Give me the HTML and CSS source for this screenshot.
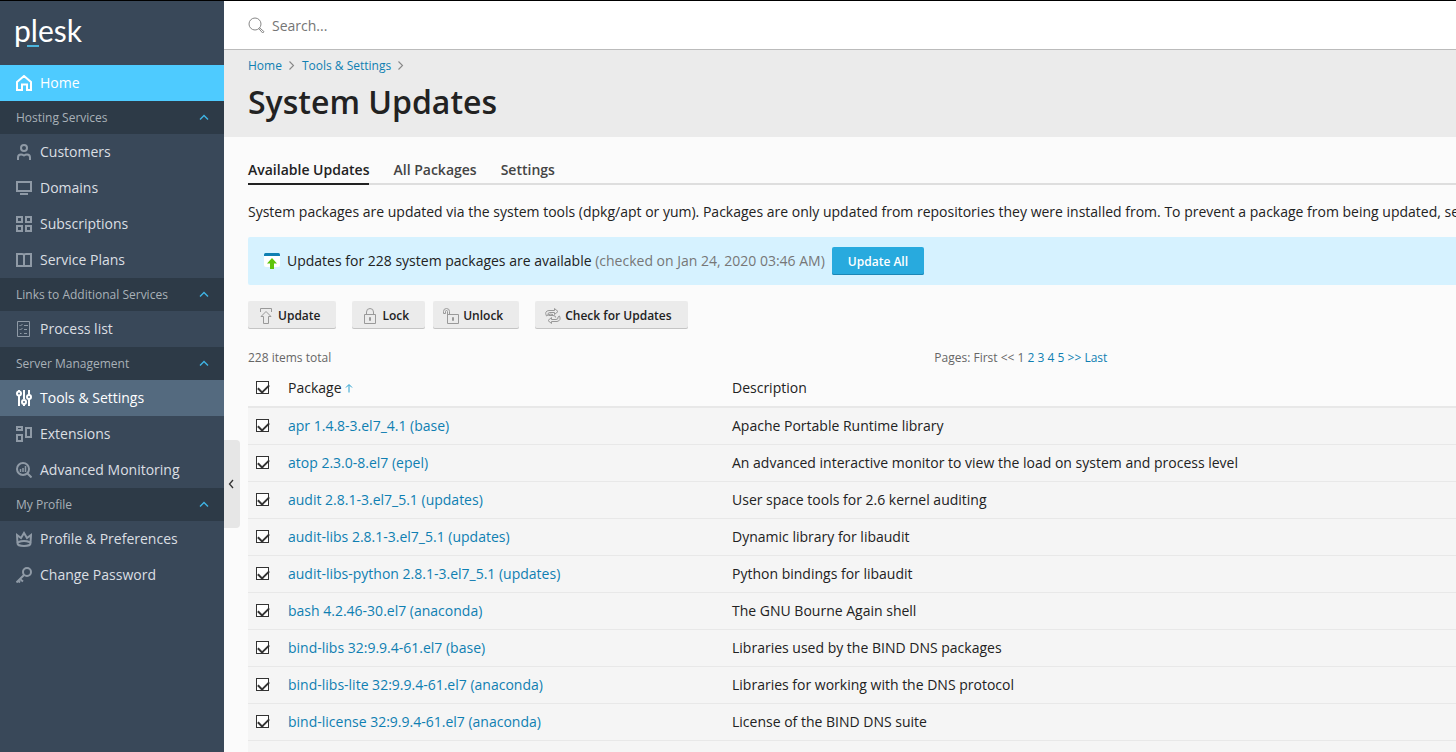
FILE: index.html
```html
<!DOCTYPE html>
<html lang="en">
<head>
<meta charset="utf-8">
<title>System Updates - Plesk</title>
<link rel="stylesheet" href="styles.css">
</head>
<body>
<svg class="sprite" aria-hidden="true">
  <symbol id="chevron-up" viewBox="0 0 10 10"><path d="M1 6.500l4-4 4 4" fill="none" stroke="currentColor" stroke-width="1.4"/></symbol>
  <symbol id="chevron-right" viewBox="0 0 8 12"><path d="M1.500 1.500l4 4-4 4" fill="none" stroke="currentColor" stroke-width="1.100"/></symbol>
</svg>
<div class="app">
  <aside class="sidebar">
    <a class="logo" href="#">p<span class="logo-mark">l</span>esk</a>
    <nav>
      <a class="item home" href="#"><svg class="icon" viewBox="0 0 16 16"><path d="M1 15V7l7-6 7 6v8h-4V9.500H6V15z"/></svg>Home</a>
      <button class="group" type="button">Hosting Services<svg class="chevron"><use href="#chevron-up"/></svg></button>
      <a class="item" href="#"><svg class="icon" viewBox="0 0 16 16"><circle cx="8" cy="4" r="3"/><path d="M2 16v-2.500q0-3 3-3 1.500 0 3 1 1.500-1 3-1 3 0 3 3V16"/></svg>Customers</a>
      <a class="item" href="#"><svg class="icon" viewBox="0 0 16 16"><path d="M1 2h14v9H1zM4 14h8"/></svg>Domains</a>
      <a class="item" href="#"><svg class="icon" viewBox="0 0 16 16"><path d="M1 1h5v5H1zM10 1h5v5h-5zM1 10h5v5H1zM10 10h5v5h-5z"/></svg>Subscriptions</a>
      <a class="item" href="#"><svg class="icon" viewBox="0 0 16 16"><path d="M1 2h5q2 0 2 1 0-1 2-1h5v12H9.500Q8 14 8 15q0-1-1.500-1H1zM8 3v12"/></svg>Service Plans</a>
      <button class="group" type="button">Links to Additional Services<svg class="chevron"><use href="#chevron-up"/></svg></button>
      <a class="item" href="#"><svg class="icon thin" viewBox="0 0 16 16"><path d="M1.500.5h12v15h-12zM3.500 4l1 1 2-2M3.500 8l1 1 2-2M4 12.500h1.500M8 4.500h4M8 8.500h3M8 12.500h3"/></svg>Process list</a>
      <button class="group" type="button">Server Management<svg class="chevron"><use href="#chevron-up"/></svg></button>
      <a class="item current" href="#"><svg class="icon" viewBox="0 0 16 16"><path d="M3 6v10M3 0v2M8 0v9M8 14v2M13 0v5M13 9v7"/><circle cx="3" cy="3.500" r="2"/><circle cx="8" cy="12" r="2"/><circle cx="13" cy="7" r="2"/></svg>Tools &amp; Settings</a>
      <a class="item" href="#"><svg class="icon" viewBox="0 0 16 16"><path d="M1 1h5v3H1zM1 9h5v6H1zM10 2h5v9h-5z"/></svg>Extensions</a>
      <a class="item" href="#"><svg class="icon" viewBox="0 0 16 16"><circle cx="7" cy="7" r="6"/><path d="M11.500 11.500l4 4"/><path stroke-width="1.500" d="M4.500 7v3M7 6v4M9.500 4v6"/></svg>Advanced Monitoring</a>
      <button class="group" type="button">My Profile<svg class="chevron"><use href="#chevron-up"/></svg></button>
      <a class="item" href="#"><svg class="icon" viewBox="0 0 16 16"><path d="M1.500 12L1 4l4 3 3-5 3 5 4-3-.5 8"/><ellipse cx="8" cy="12.500" rx="6.500" ry="2.500"/></svg>Profile &amp; Preferences</a>
      <a class="item" href="#"><svg class="icon" viewBox="0 0 16 16"><circle cx="11" cy="5" r="4"/><path d="M8 8l-7.500 7.500M4 12l3 2.500M2 13.500l2 2"/></svg>Change Password</a>
    </nav>
    <button class="collapse" type="button" aria-label="Collapse menu"><svg viewBox="0 0 6 10"><path d="M5 1L1.500 5 5 9"/></svg></button>
  </aside>
  <div class="page">
    <header class="topbar">
      <svg class="search-icon" viewBox="0 0 17 17"><circle cx="7" cy="7" r="6"/><path d="M11.300 10.500l4.700 4.200-1.300 1.300-4.200-4.700"/></svg>
      <input class="search" type="search" placeholder="Search..." aria-label="Search">
    </header>
    <div class="heading">
      <nav class="crumbs"><a href="#">Home</a><svg><use href="#chevron-right"/></svg><a href="#">Tools &amp; Settings</a><svg><use href="#chevron-right"/></svg></nav>
      <h1>System Updates</h1>
    </div>
    <main class="content">
      <nav class="tabs"><a class="active" href="#">Available Updates</a><a href="#">All Packages</a><a href="#">Settings</a></nav>
      <p class="intro">System packages are updated via the system tools (dpkg/apt or yum). Packages are only updated from repositories they were installed from. To prevent a package from being updated, se</p>
      <div class="notice">
        <svg class="notice-icon" viewBox="0 0 16 16"><path fill="#fff" d="M0 2h16v10q0 2-2 2H2q-2 0-2-2z"/><path fill="#0f7fb2" d="M0 3V1.500Q0 0 1.500 0h13Q16 0 16 1.500V3z"/><path fill="#5fc40b" d="M8 5l5 5.500h-3V16H6v-5.500H3z"/></svg>
        <span>Updates for 228 system packages are available <span class="muted">(checked on Jan 24, 2020 03:46 AM)</span></span>
        <button class="primary" type="button">Update All</button>
      </div>
      <div class="actions">
        <button class="btn" type="button"><svg viewBox="0 0 16 16"><path d="M2.500 4V.5h11V4M8 3.500l5 5h-2.500v7h-5v-7H3z"/></svg>Update</button>
        <div class="pair">
          <button class="btn" type="button"><svg viewBox="0 0 16 16"><path d="M2.500 6.500h11v9h-11zM4.500 6.500V4q0-3.500 3.500-3.500T11.500 4v2.500M7.500 9.500h1v3h-1z"/></svg>Lock</button>
          <button class="btn" type="button"><svg viewBox="0 0 16 16"><path d="M4.500 6.500h11v9h-11zM6.500 6.500V3.500q0-3-3-3t-3 3v2h2v-2q0-1 1-1t1 1v4M9.500 9.500h1v3h-1z"/></svg>Unlock</button>
        </div>
        <button class="btn" type="button"><svg viewBox="0 0 16 16"><path d="M9.500 2.500V.5l3.500 3-3.500 3v-2H5q-2.500 0-2 2.500L1.500 8Q-1 3 4 2.500zM6.500 11.500v-2l-3.500 3 3.500 3v-2H12q4.500-1 2.500-5.500l-1.500 1q.5 2.500-2 2.500zM3.500 7.500H8q3 0 2.500 2M3 7q2-1.500 5-.5"/></svg>Check for Updates</button>
      </div>
      <div class="listbar"><span>228 items total</span><nav>Pages: First &lt;&lt; 1 <a href="#">2</a> <a href="#">3</a> <a href="#">4</a> <a href="#">5</a> <a href="#">&gt;&gt;</a> <a href="#">Last</a></nav></div>
      <table>
        <thead><tr><th class="pick"><input type="checkbox" checked aria-label="Select all"></th><th class="name">Package <svg class="sort" viewBox="0 0 8 10"><path d="M4 9.500V2M1 4.500l3-3 3 3"/></svg></th><th>Description</th></tr></thead>
        <tbody>
          <tr><td><input type="checkbox" checked aria-label="apr"></td><td><a href="#">apr 1.4.8-3.el7_4.1 (base)</a></td><td>Apache Portable Runtime library</td></tr>
          <tr><td><input type="checkbox" checked aria-label="atop"></td><td><a href="#">atop 2.3.0-8.el7 (epel)</a></td><td>An advanced interactive monitor to view the load on system and process level</td></tr>
          <tr><td><input type="checkbox" checked aria-label="audit"></td><td><a href="#">audit 2.8.1-3.el7_5.1 (updates)</a></td><td>User space tools for 2.6 kernel auditing</td></tr>
          <tr><td><input type="checkbox" checked aria-label="audit-libs"></td><td><a href="#">audit-libs 2.8.1-3.el7_5.1 (updates)</a></td><td>Dynamic library for libaudit</td></tr>
          <tr><td><input type="checkbox" checked aria-label="audit-libs-python"></td><td><a href="#">audit-libs-python 2.8.1-3.el7_5.1 (updates)</a></td><td>Python bindings for libaudit</td></tr>
          <tr><td><input type="checkbox" checked aria-label="bash"></td><td><a href="#">bash 4.2.46-30.el7 (anaconda)</a></td><td>The GNU Bourne Again shell</td></tr>
          <tr><td><input type="checkbox" checked aria-label="bind-libs"></td><td><a href="#">bind-libs 32:9.9.4-61.el7 (base)</a></td><td>Libraries used by the BIND DNS packages</td></tr>
          <tr><td><input type="checkbox" checked aria-label="bind-libs-lite"></td><td><a href="#">bind-libs-lite 32:9.9.4-61.el7 (anaconda)</a></td><td>Libraries for working with the DNS protocol</td></tr>
          <tr><td><input type="checkbox" checked aria-label="bind-license"></td><td><a href="#">bind-license 32:9.9.4-61.el7 (anaconda)</a></td><td>License of the BIND DNS suite</td></tr>
        </tbody>
      </table>
      <div class="table-rest"></div>
    </main>
  </div>
</div>
</body>
</html>
```
FILE: styles.css
```css
* { box-sizing: border-box; }
body {
  margin: 0;
  background: #fbfbfb;
  color: #222;
  font: 14px/20px "Open Sans", sans-serif;
}
a { color: #0f7fb2; text-decoration: none; }
button, input { font: inherit; }
.sprite { display: none; }
.app {
  display: flex;
  min-height: 100vh;
  border-top: 1px solid #000;
}

/* Sidebar */
.sidebar {
  position: relative;
  flex: 0 0 224px;
  background: #394859;
}
.logo {
  display: block;
  height: 64px;
  padding: 9px 14px;
  color: #fff;
  font: 400 30px/40px Lato, sans-serif;
}
.logo-mark { position: relative; }
.logo-mark::after {
  content: "";
  position: absolute;
  left: -4px;
  bottom: 1px;
  width: 12px;
  height: 2px;
  background: #4bb5dd;
}
.item {
  display: flex;
  align-items: center;
  gap: 8px;
  height: 36px;
  padding: 0 16px;
  color: #dbdfe3;
}
.icon {
  width: 16px;
  height: 16px;
  fill: none;
  stroke: #8f9aa6;
  stroke-width: 2;
}
.icon.thin { stroke-width: 1; }
.home { background: #4ecbff; color: #fff; }
.current { background: #546a7f; color: #fff; }
.home .icon, .current .icon { stroke: #fff; }
.group {
  display: flex;
  align-items: center;
  justify-content: space-between;
  width: 100%;
  height: 33px;
  padding: 0 15px 0 16px;
  border: 0;
  background: #2d3a47;
  color: #a9b1b8;
  font-size: 12px;
}
.chevron { width: 10px; height: 10px; color: #3fb4e4; }
.collapse {
  position: absolute;
  left: 100%;
  top: 439px;
  width: 16px;
  height: 88px;
  padding: 0 4px;
  border: 0;
  border-radius: 0 4px 4px 0;
  background: #e6e6e6;
}
.collapse svg {
  display: block;
  width: 6px;
  height: 10px;
  fill: none;
  stroke: #333;
  stroke-width: 1.3;
}

/* Page header */
.page {
  display: flex;
  flex: 1;
  flex-direction: column;
  min-width: 0;
}
.topbar {
  display: flex;
  align-items: center;
  gap: 7px;
  height: 49px;
  padding: 1px 24px 0;
  border-bottom: 1px solid #bbb;
  background: #fff;
}
.search-icon {
  width: 17px;
  height: 17px;
  fill: none;
  stroke: #888;
}
.search {
  flex: 1;
  padding: 0;
  border: 0;
  outline: 0;
  background: none;
}
.search::placeholder { color: #757575; }
.heading { height: 87px; padding: 6px 24px; background: #ebebeb; }
.crumbs {
  display: flex;
  align-items: center;
  gap: 6px;
  font-size: 12px;
}
.crumbs svg { width: 8px; height: 12px; color: #888; }
h1 { margin: 6px 0 0; font-size: 32px; line-height: 40px; font-weight: 600; }

/* Content */
.content {
  display: flex;
  flex: 1;
  flex-direction: column;
  padding: 18px 0 0 24px;
}
.tabs {
  display: flex;
  gap: 24px;
  border-bottom: 2px solid #dedede;
  font-weight: 600;
}
.tabs a {
  margin-bottom: -2px;
  padding: 5px 0 3px;
  border-bottom: 2px solid transparent;
  color: #444;
}
.tabs .active { border-color: #222; color: #222; }
.intro { margin: 17px 0 15px; white-space: nowrap; }
.notice {
  display: flex;
  align-items: center;
  gap: 7px;
  height: 48px;
  padding: 0 16px;
  border-radius: 2px 0 0 2px;
  background: #d6f2ff;
}
.notice-icon { width: 16px; height: 16px; }
.muted { color: #777; }
.primary, .btn {
  height: 28px;
  border: 0;
  border-radius: 2px;
  font-size: 12px;
  font-weight: 600;
}
.primary {
  padding: 1px 16px 0;
  background: #28aade;
  box-shadow: inset 0 -1px #1c86b5;
  color: #fff;
}
.actions { display: flex; gap: 16px; margin: 16px 0; }
.pair { display: flex; gap: 8px; }
.btn {
  display: flex;
  align-items: center;
  gap: 4px;
  padding: 1px 16px 0 10px;
  background: #ebebeb;
  box-shadow: inset 0 -1px #c4c4c4;
  color: #222;
}
.btn svg { width: 16px; height: 16px; fill: none; stroke: #999; }
.listbar {
  display: grid;
  grid-template-columns: 25fr 19fr;
  margin: 3px 0 1px;
  color: #666;
  font-size: 12px;
}

/* Package table */
table { width: 100%; border-collapse: collapse; table-layout: fixed; }
th, td { height: 37px; padding: 0; text-align: left; font-weight: 400; }
th { height: 38px; border-bottom: 2px solid #e8e8e8; }
td { border-bottom: 1px solid #e8e8e8; background: #f5f5f5; }
.table-rest { flex: 1; background: #f5f5f5; }
.pick { width: 40px; }
.name { width: 444px; }
.sort {
  width: 8px;
  height: 10px;
  fill: none;
  stroke: #28a0cf;
}
input[type="checkbox"] {
  appearance: none;
  display: block;
  width: 13px;
  height: 13px;
  margin: 0 8px;
  border: 1px solid #333;
  background: #fff;
}
input[type="checkbox"]:checked::before {
  content: "";
  display: block;
  width: 9px;
  height: 5px;
  margin: 2px 1px;
  border: solid #333;
  border-width: 0 0 2px 2px;
  transform: rotate(-45deg);
}
```
